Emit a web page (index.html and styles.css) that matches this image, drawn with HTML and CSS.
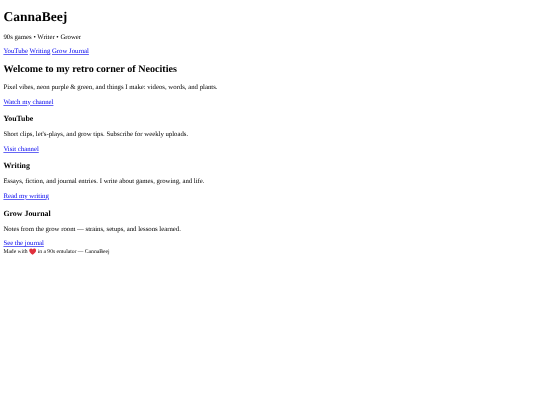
FILE: index.html
```html
<!DOCTYPE html>
<html>
    <head>
        <title>CannaBeej</title>
        <link rel="stylesheet" href="styles.css">
    </head>
    <body>
        <header>
            <h1>CannaBeej</h1>
            <p>90s games • Writer • Grower</p>
            <nav>
                <a href="#youtube">YouTube</a>
                <a href="#writing">Writing</a>
                <a href="#grow">Grow Journal</a>
            </nav>
        </header>

        <section>
            <h2>Welcome to my retro corner of Neocities</h2>
            <p>Pixel vibes, neon purple &amp; green, and things I make: videos, words, and plants.</p>
            <a href="#youtube">Watch my channel</a>
        </section>

        <section id="youtube">
            <h3>YouTube</h3>
            <p>Short clips, let's-plays, and grow tips. Subscribe for weekly uploads.</p>
            <a href="#">Visit channel</a>
        </section>

        <section id="writing">
            <h3>Writing</h3>
            <p>Essays, fiction, and journal entries. I write about games, growing, and life.</p>
            <a href="#">Read my writing</a>
        </section>

        <section id="grow">
            <h3>Grow Journal</h3>
            <p>Notes from the grow room — strains, setups, and lessons learned.</p>
            <a href="#">See the journal</a>
        </section>

        <footer>
            <small>Made with <svg class="heart" viewBox="0 0 16 16"><path d="M8 15C3 11 .5 8.5 .5 5.2 .5 2.8 2.3 1 4.5 1 6 1 7.3 1.8 8 3.1 8.7 1.8 10 1 11.5 1 13.7 1 15.500 2.800 15.500 5.200 15.500 8.500 13 11 8 15Z"/></svg> in a 90s emulator — CannaBeej</small>
        </footer>
    </body>
</html>
```

FILE: styles.css
```css
html {
    background: #fff;
}
body {
    margin: 0 3.4px;
    font-family: "Liberation Serif", "Times New Roman", serif;
    font-size: 6.75px;
    line-height: 1.15;
    color: #000;
    text-rendering: geometricPrecision;
    filter: blur(0.4px);
}
a {
    color: #00e;
    text-decoration-color: rgba(0, 0, 238, 0.6);
}
.heart {
    width: 1.3em;
    height: 1.3em;
    vertical-align: -0.3em;
    fill: #e0303c;
}
```
